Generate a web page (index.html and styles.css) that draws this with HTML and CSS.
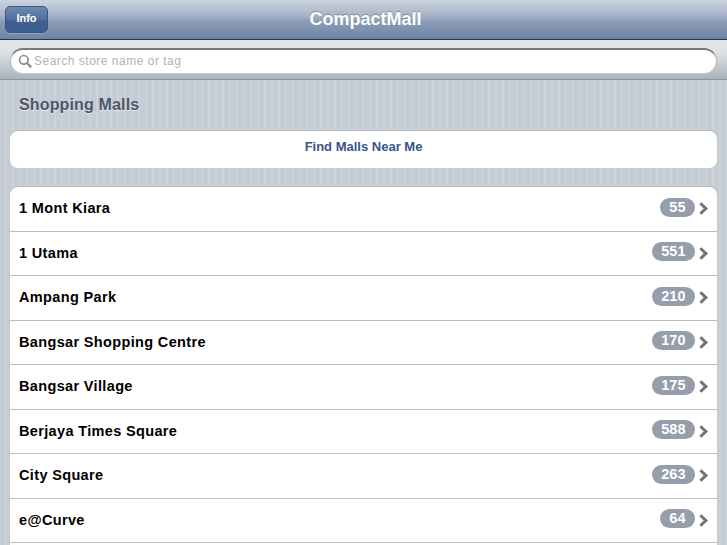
FILE: index.html
```html
<!DOCTYPE html>
<html lang="en">
<head>
    <meta charset="UTF-8">
    <meta name="viewport" content="width=device-width, initial-scale=1.0">
    <title>CompactMall</title>
    <link rel="stylesheet" href="styles.css">
</head>
<body>
    <header class="toolbar">
        <button class="info-button">Info</button>
        <h1 class="title">CompactMall</h1>
    </header>

    <div class="search-bar">
        <div class="search-field">
            <svg class="search-icon" width="14" height="14" viewBox="0 0 14 14">
                <circle cx="5.8" cy="5.8" r="4.3" fill="none" stroke="#8e8e8e" stroke-width="1.7"/>
                <line x1="9" y1="9" x2="12.6" y2="12.6" stroke="#8e8e8e" stroke-width="2.2" stroke-linecap="round"/>
            </svg>
            <span class="search-placeholder">Search store name or tag</span>
        </div>
    </div>

    <main class="content">
        <h2 class="group-title">Shopping Malls</h2>

        <a class="find-button">Find Malls Near Me</a>

        <ul class="mall-list">
            <li class="mall-row"><span class="mall-name">1 Mont Kiara</span><span class="count">55</span><span class="chevron"></span></li>
            <li class="mall-row"><span class="mall-name">1 Utama</span><span class="count">551</span><span class="chevron"></span></li>
            <li class="mall-row"><span class="mall-name">Ampang Park</span><span class="count">210</span><span class="chevron"></span></li>
            <li class="mall-row"><span class="mall-name">Bangsar Shopping Centre</span><span class="count">170</span><span class="chevron"></span></li>
            <li class="mall-row"><span class="mall-name">Bangsar Village</span><span class="count">175</span><span class="chevron"></span></li>
            <li class="mall-row"><span class="mall-name">Berjaya Times Square</span><span class="count">588</span><span class="chevron"></span></li>
            <li class="mall-row"><span class="mall-name">City Square</span><span class="count">263</span><span class="chevron"></span></li>
            <li class="mall-row"><span class="mall-name">e@Curve</span><span class="count">64</span><span class="chevron"></span></li>
        </ul>
    </main>
</body>
</html>
```

FILE: styles.css
```css
html, body {
    height: 545px;
    margin: 0;
    overflow: hidden;
}
body {
    font-family: "Liberation Sans", Arial, sans-serif;
    background: repeating-linear-gradient(90deg, #c5ccd4, #c5ccd4 5px, #cbd2d8 5px, #cbd2d8 7px);
}

/* top bar */
.toolbar {
    height: 39px;
    padding-left: 4px;
    border-bottom: 1px solid #2d3642;
    background: linear-gradient(#cdd4de, #a5b3c7 40%, #8b9db8 55%, #6e84a3);
    display: flex;
    align-items: center;
    justify-content: center;
    position: relative;
}
.title {
    margin: 0;
    font-size: 18px;
    font-weight: bold;
    color: #fff;
    text-shadow: 0 -1px 0 rgba(0, 0, 0, 0.25);
}
.info-button {
    position: absolute;
    left: 5px;
    top: 6px;
    width: 43px;
    height: 27px;
    padding: 0 0 3px;
    border: 1px solid #3f5478;
    border-radius: 5px;
    background: linear-gradient(#6f89af, #4f6f9f 50%, #41608f 52%, #3d5d93);
    font-family: inherit;
    font-size: 11px;
    font-weight: bold;
    color: #fff;
    box-shadow: 0 1px 0 rgba(255, 255, 255, 0.2);
}

/* search */
.search-bar {
    height: 31px;
    padding: 8px 10px 0;
    border-bottom: 1px solid #8a929c;
    background: linear-gradient(#e3e6e9, #dfe2e5 30%, #a9b3bd);
}
.search-field {
    height: 26px;
    width: 707px;
    box-sizing: border-box;
    padding: 0 0 2px 7px;
    border-radius: 13px;
    background: #fff;
    border-top: 2px solid #77797c;
    border-left: 1px solid #b4b6b8;
    border-right: 1px solid #b4b6b8;
    border-bottom: 1px solid #c8cbce;
    display: flex;
    align-items: center;
}
.search-icon {
    margin-right: 2px;
}
.search-placeholder {
    font-size: 12px;
    color: #b3b3b3;
    letter-spacing: 0.5px;
}

/* list area */
.content {
    padding: 0 10px;
}
.group-title {
    margin: 0;
    padding: 16px 0 0 9px;
    height: 35px;
    font-size: 16px;
    font-weight: bold;
    letter-spacing: 0.15px;
    color: #4c566c;
    text-shadow: 0 1px 0 rgba(255, 255, 255, 0.6);
}
.find-button {
    display: block;
    height: 37px;
    line-height: 32px;
    border-radius: 8px;
    background: #fff;
    text-align: center;
    font-size: 13px;
    font-weight: bold;
    color: #39548a;
    box-shadow: 0 -1px 0 #b4b9c0;
}
.mall-list {
    list-style: none;
    margin: 19px 0 0;
    padding: 0 0 2px;
    background: #fff;
    border-radius: 8px 8px 0 0;
    box-shadow: 0 -1px 0 #b4b9c0;
}
.mall-row {
    height: 44.5px;
    box-sizing: border-box;
    border-bottom: 1px solid #bdbdbd;
    display: flex;
    align-items: center;
    padding: 0 9px 0 9px;
}
.mall-name {
    flex: 1;
    margin-bottom: 1px;
    font-size: 14.5px;
    font-weight: bold;
    color: #000;
    letter-spacing: 0.35px;
}
.count {
    height: 19px;
    line-height: 18px;
    margin-bottom: 3px;
    padding: 0 9.5px;
    border-radius: 10px;
    background: #969dab;
    color: #fff;
    font-size: 14.5px;
    font-weight: bold;
    text-align: center;
}
.chevron {
    width: 6px;
    height: 6px;
    margin-left: 2px;
    margin-right: 2px;
    border-top: 3px solid #737373;
    border-right: 3px solid #737373;
    transform: rotate(45deg);
}
```
